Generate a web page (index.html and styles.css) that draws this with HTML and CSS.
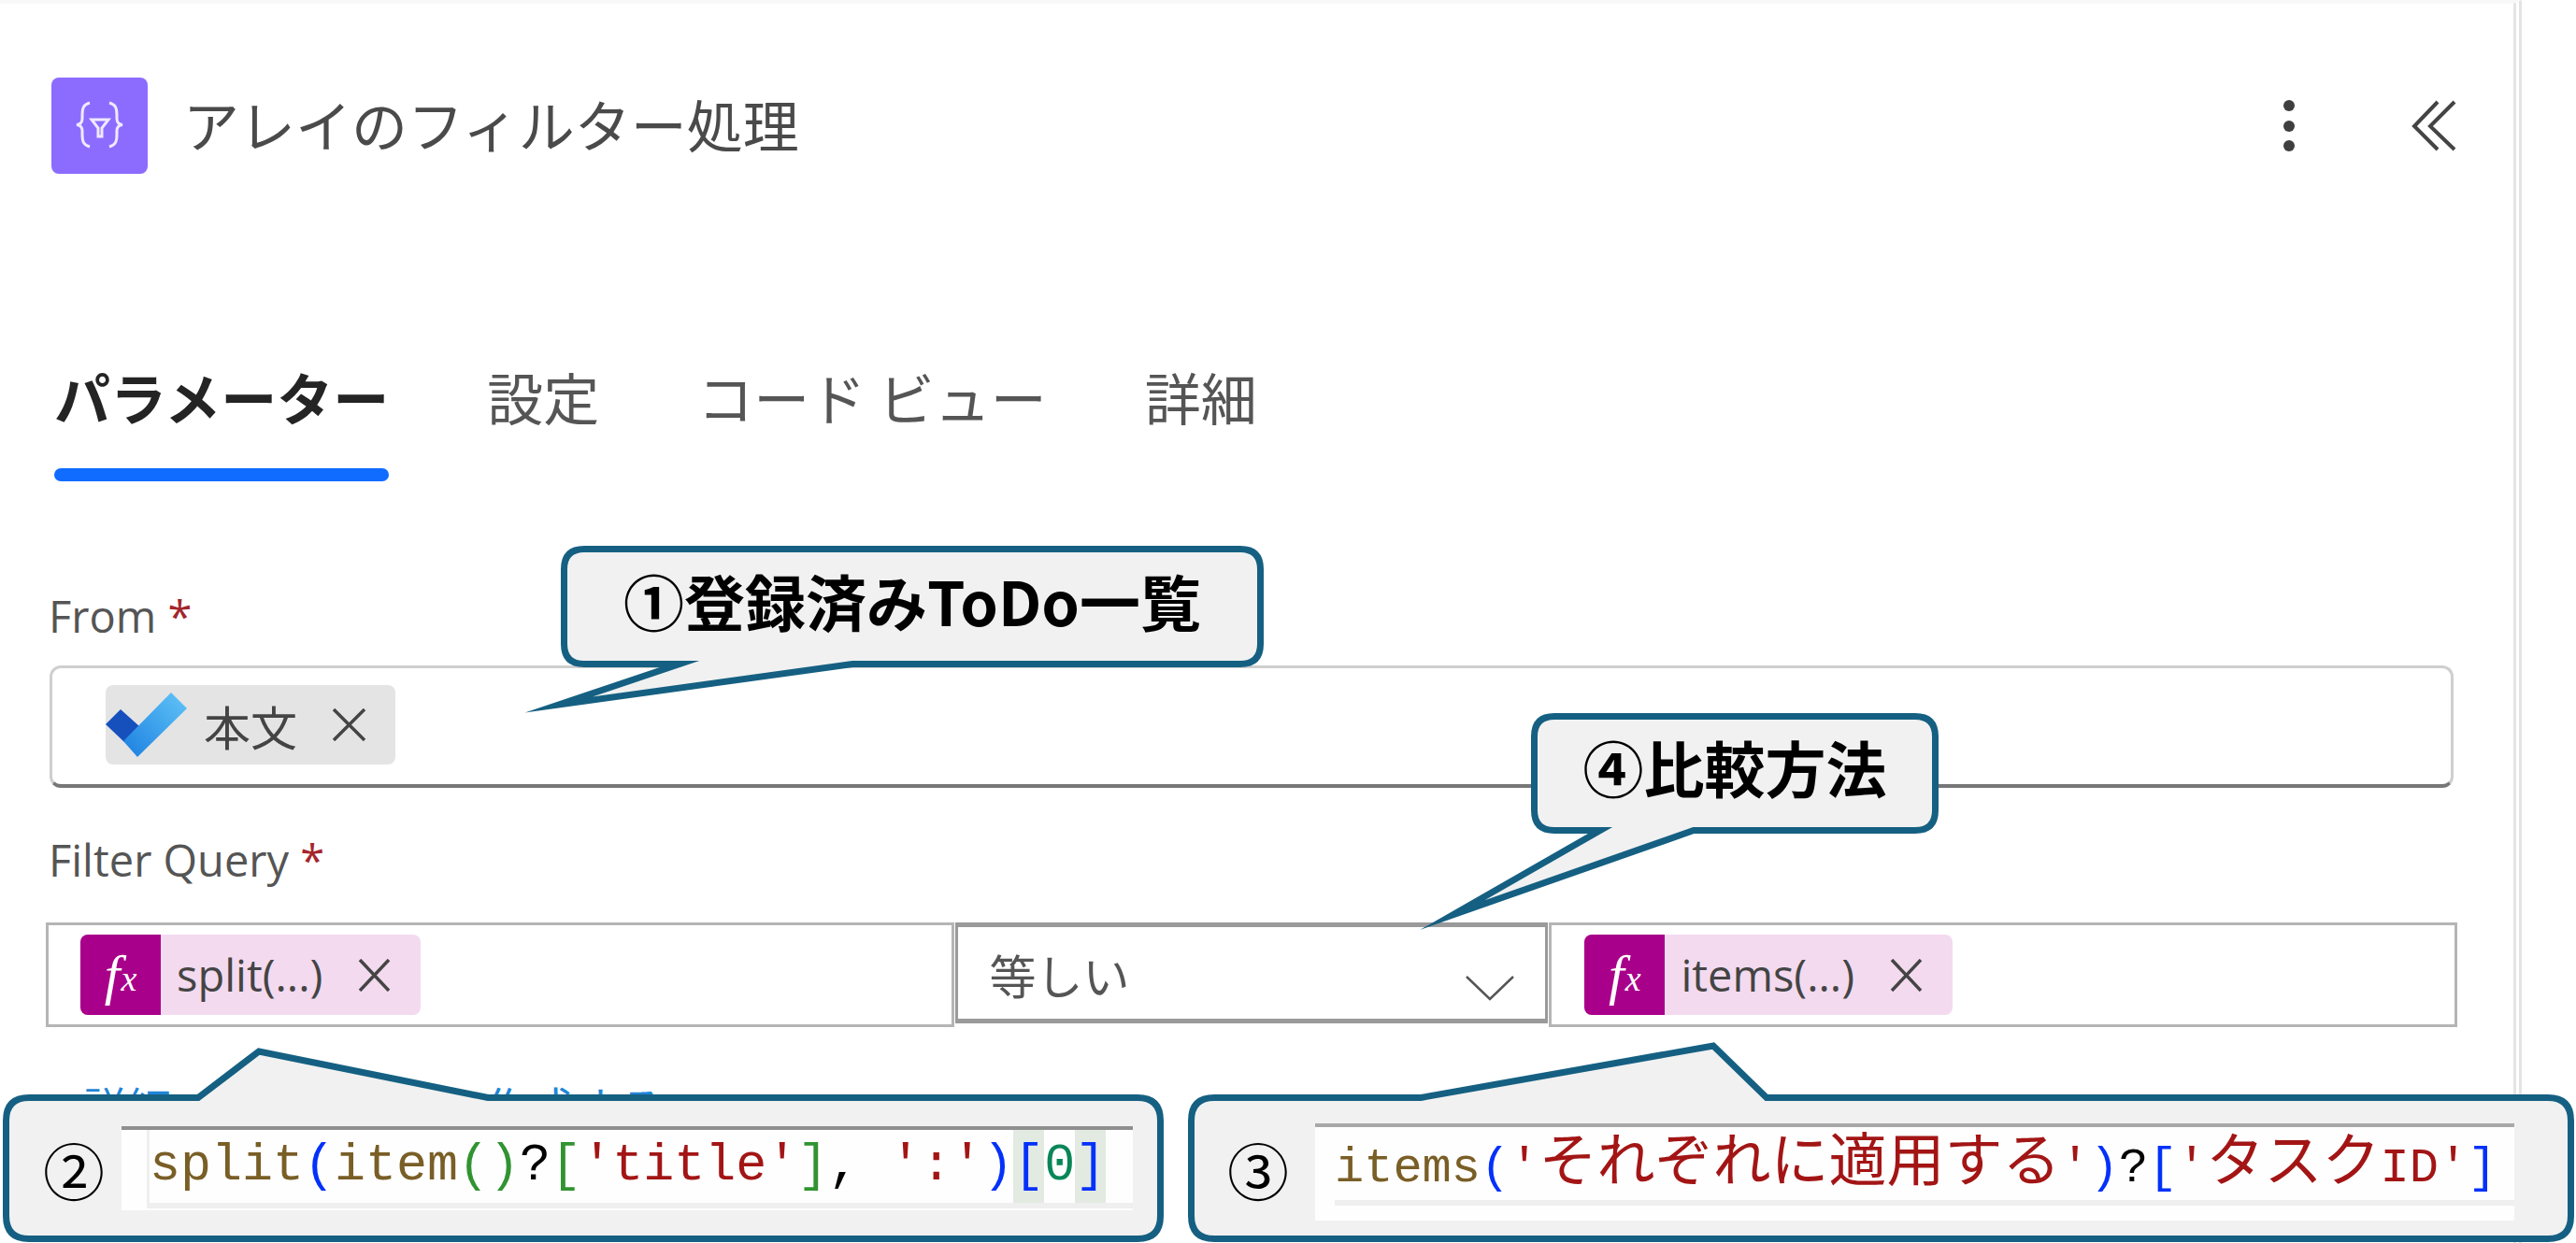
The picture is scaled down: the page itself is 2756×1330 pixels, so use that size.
FILE: index.html
```html
<!DOCTYPE html>
<html lang="ja">
<head>
<meta charset="utf-8">
<title>アレイのフィルター処理</title>
<link rel="stylesheet" href="styles.css">
</head>
<body>
<main class="panel">
  <header class="head">
    <span class="op-icon">
      <svg width="103" height="103" viewBox="0 0 103 103" fill="none" stroke="#efe9ff" stroke-width="3">
        <path d="M41 27C34 29 33 33 33 40V44C33 48 31 50 27 50.5C31 51 33 53 33 57V61C33 68 34 72 41 74"/>
        <path d="M62 27C69 29 70 33 70 40V44C70 48 72 50 76 50.5C72 51 70 53 70 57V61C70 68 69 72 62 74"/>
        <path d="M43 45H61L54 54V63H50V54Z"/>
      </svg>
    </span>
    <h1 class="title">アレイのフィルター処理</h1>
    <div class="actions">
      <svg width="14" height="58" viewBox="0 0 14 58" fill="#3f3f3f"><circle cx="7" cy="7" r="6"/><circle cx="7" cy="29" r="6"/><circle cx="7" cy="50" r="6"/></svg>
      <svg width="48" height="56" viewBox="0 0 48 56" fill="none" stroke="#444" stroke-width="4"><path d="M28 2L3 28L28 53"/><path d="M46 2L20 28L46 53"/></svg>
    </div>
  </header>

  <nav class="tabs">
    <div class="tab active">パラメーター</div>
    <div class="tab">設定</div>
    <div class="tab">コード ビュー</div>
    <div class="tab">詳細</div>
  </nav>

  <label class="label label-from">From <span class="req">*</span></label>
  <div class="input">
    <span class="chip chip-grey">
      <svg width="87" height="69" viewBox="0 0 87 69">
        <defs><linearGradient id="todo" x1="0" y1="1" x2="1" y2="0"><stop offset="0" stop-color="#1b7fe0"/><stop offset="1" stop-color="#62c5f8"/></linearGradient></defs>
        <path fill="#1650bd" d="M0 34L16 18L36 36L20 53Z"/>
        <path fill="url(#todo)" d="M19 52L70 0L87 17L34 69Z"/>
      </svg>
      <span class="chip-text">本文</span>
      <svg class="x" width="37" height="35" viewBox="0 0 37 35" stroke="#444" stroke-width="3.5"><path d="M2 1L35 34M35 1L2 34"/></svg>
    </span>
  </div>

  <label class="label label-filter">Filter Query <span class="req">*</span></label>
  <div class="query">
    <div class="qbox qbox-left">
      <span class="chip chip-fx">
        <span class="fx"><span class="fx-f">f</span><span class="fx-x">x</span></span>
        <span class="fx-text">split(...)</span>
        <svg class="x" width="35" height="35" viewBox="0 0 35 35" stroke="#444" stroke-width="3.5"><path d="M2 1L33 34M33 1L2 34"/></svg>
      </span>
    </div>
    <div class="select">
      <span class="select-text">等しい</span>
      <svg class="chev" width="52" height="27" viewBox="0 0 52 27" fill="none" stroke="#555" stroke-width="2.5"><path d="M1 1L26 25L51 1"/></svg>
    </div>
    <div class="qbox qbox-right">
      <span class="chip chip-fx">
        <span class="fx"><span class="fx-f">f</span><span class="fx-x">x</span></span>
        <span class="fx-text">items(...)</span>
        <svg class="x" width="35" height="35" viewBox="0 0 35 35" stroke="#444" stroke-width="3.5"><path d="M2 1L33 34M33 1L2 34"/></svg>
      </span>
    </div>
  </div>
  <a class="link">詳細パラメーターを作成する</a>
</main>

<svg class="shapes" width="2756" height="1330" viewBox="0 0 2756 1330">
  <path d="M625 587.5H1327Q1348.5 587.5 1348.5 609V689Q1348.5 710.5 1327 710.5H912L598 754L727 710.5H625Q603.5 710.5 603.5 689V609Q603.5 587.5 625 587.5Z"/>
  <path d="M1663 766.5H2049Q2070.5 766.5 2070.5 788V867Q2070.5 888.5 2049 888.5H1812L1554 979L1712 888.5H1663Q1641.5 888.5 1641.5 867V788Q1641.5 766.5 1663 766.5Z"/>
  <path d="M31 1174.5H212L277 1125L522 1174.5H1217Q1241.5 1174.5 1241.5 1199V1301Q1241.5 1325.5 1217 1325.5H31Q6.5 1325.5 6.5 1301V1199Q6.5 1174.5 31 1174.5Z"/>
  <path d="M1299 1174.5H1520L1833 1119L1890 1174.5H2726Q2750.5 1174.5 2750.5 1199V1301Q2750.5 1325.5 2726 1325.5H1299Q1274.5 1325.5 1274.5 1301V1199Q1274.5 1174.5 1299 1174.5Z"/>
</svg>

<div class="note note-1">①登録済みToDo一覧</div>
<div class="note note-4">④比較方法</div>

<div class="code-note code-note-2">
  <span class="num">②</span>
  <div class="shot shot-2">
    <div class="line"><span class="fn">split</span><span class="pb">(</span><span class="fn">item</span><span class="pg">()</span><span class="k">?</span><span class="pg">[</span><span class="s">'title'</span><span class="pg">]</span><span class="k">, </span><span class="s">':'</span><span class="pb">)</span><span class="hl pb">[</span><span class="n">0</span><span class="hl pb">]</span></div>
  </div>
</div>

<div class="code-note code-note-3">
  <span class="num">③</span>
  <div class="shot shot-3">
    <div class="line"><span class="fn">items</span><span class="pb">(</span><span class="s">'<span class="cjk">それぞれに適用する</span>'</span><span class="pb">)</span><span class="k">?</span><span class="pb">[</span><span class="s">'<span class="cjk">タスク</span>ID'</span><span class="pb">]</span></div>
  </div>
</div>
</body>
</html>
```
FILE: styles.css
```css
html, body { margin: 0; height: 1330px; overflow: hidden; background: #fff; }
body { position: relative; font-family: "Noto Sans CJK JP", "Open Sans", sans-serif; color: #424242; }

.panel {
  box-sizing: border-box; width: 2698px; height: 1330px;
  border-top: 4px solid #f8f8f8; border-right: 9px double #e4e4e4;
}

.head { display: flex; align-items: center; padding: 79px 61px 0 55px; }
.op-icon { display: flex; width: 103px; height: 103px; border-radius: 8px; background: #8c6cff; }
.title { margin: 0 0 6px 38px; font-size: 60px; font-weight: 400; line-height: 97px; color: #4a4a4a; }
.actions { display: flex; align-items: center; gap: 124px; margin-left: auto; }

.tabs { display: flex; gap: 105px; margin: 198px 0 0 58px; }
.tab { font-size: 60px; line-height: 80px; color: #555; }
.tab::after { content: ""; display: block; height: 14px; margin-top: 37px; border-radius: 7px; }
.tab.active { font-weight: 700; color: #242424; }
.tab.active::after { background: #0f6cff; }

.label { display: block; margin-left: 52px; font-family: "Open Sans", sans-serif; font-size: 47px; line-height: 60px; color: #555; }
.label-from { margin-top: 114px; }
.label-filter { margin-top: 47px; }
.req { color: #a4262c; }

.input {
  box-sizing: border-box; display: flex; width: 2572px; height: 131px;
  margin: 23px 0 0 53px; padding: 18px 0 0 57px;
  border: 3px solid #cfcfcf; border-bottom: 4px solid #777; border-radius: 12px;
}

.chip { display: flex; align-items: center; height: 85px; border-radius: 8px; }
.chip-grey { width: 310px; background: #e4e4e4; }
.chip-text { margin-left: 18px; font-size: 50px; line-height: 60px; color: #444; }
.chip-grey .x { margin-left: 37px; }

.query { display: flex; align-items: flex-start; width: 2580px; margin: 37px 0 0 49px; }
.qbox { box-sizing: border-box; display: flex; height: 112px; padding: 10px 0 0 34px; border: 3px solid #b5b5b5; }
.qbox-left { width: 972px; }
.qbox-right { width: 972px; margin-left: 1px; padding-left: 35px; }
.chip-fx { height: 86px; background: #f3daef; }
.fx { display: flex; align-items: center; justify-content: center; width: 86px; height: 86px; border-radius: 8px 0 0 8px; background: #a8008a; color: #fff; font-family: "Liberation Serif", serif; font-style: italic; }
.fx-f { font-size: 60px; line-height: 60px; }
.fx-x { margin: 8px 0 0 1px; font-size: 38px; line-height: 40px; }
.fx-text { margin-left: 17px; font-family: "Open Sans", sans-serif; font-size: 47px; line-height: 60px; color: #444; }
.chip-fx .x { margin: 0 32px 0 38px; }

.select { box-sizing: border-box; display: flex; width: 635px; height: 108px; margin-left: 1px; padding: 0 33px 0 34px; border: 3px solid #9a9a9a; border-width: 5px 3px; }
.select-text { font-size: 50px; line-height: 100px; color: #555; }
.chev { margin: 52px 0 0 auto; }

.link { display: block; margin: 54px 0 0 88px; font-size: 48px; line-height: 60px; color: #1f86d8; }

.shapes { position: absolute; left: 0; top: 0; }
.shapes path { fill: #f1f1f1; stroke: #156082; stroke-width: 7; stroke-miterlimit: 20; }

.note { position: absolute; display: flex; align-items: center; justify-content: center; box-sizing: border-box; padding-bottom: 14px; font-weight: 700; font-size: 65px; color: #000; line-height: 1; }
.note-1 { left: 604px; top: 588px; width: 744px; height: 122px; }
.note-4 { left: 1642px; top: 767px; width: 428px; height: 121px; }

.code-note { position: absolute; top: 1178px; display: flex; align-items: center; height: 144px; }
.code-note-2 { left: 10px; width: 1228px; }
.code-note-3 { left: 1278px; width: 1468px; }
.num { width: 66px; font-size: 66px; line-height: 1; color: #000; }
.code-note-2 .num { margin-left: 36px; }
.code-note-3 .num { margin-left: 35px; }

.shot { box-sizing: border-box; background: #fefefe; border-top: 4px solid #8f8f8f; font-family: "Liberation Mono", "Noto Sans CJK JP", monospace; }
.shot-2 { width: 1082px; height: 90px; margin-left: 18px; padding-left: 27px; }
.shot-3 { width: 1283px; height: 104px; margin: 8px 0 0 28px; padding-left: 21px; border-top-color: #a8a8a8; }
.line { white-space: pre; border-bottom: 6px solid #efefef; }
.shot-2 .line { box-sizing: border-box; font-size: 55px; line-height: 78px; height: 84px; border-left: 3px solid #efefef; }
.shot-3 .line { box-sizing: border-box; font-size: 52px; line-height: 84px; height: 84px; }
.cjk { font-family: "Noto Sans CJK JP", sans-serif; font-size: 62px; line-height: 62px; }
.fn { color: #795e26; }
.pb { color: #0431fa; }
.pg { color: #319331; }
.k { color: #000; }
.s { color: #a31515; }
.n { color: #098658; }
.hl { display: inline-block; background: #e2eae2; }
```
